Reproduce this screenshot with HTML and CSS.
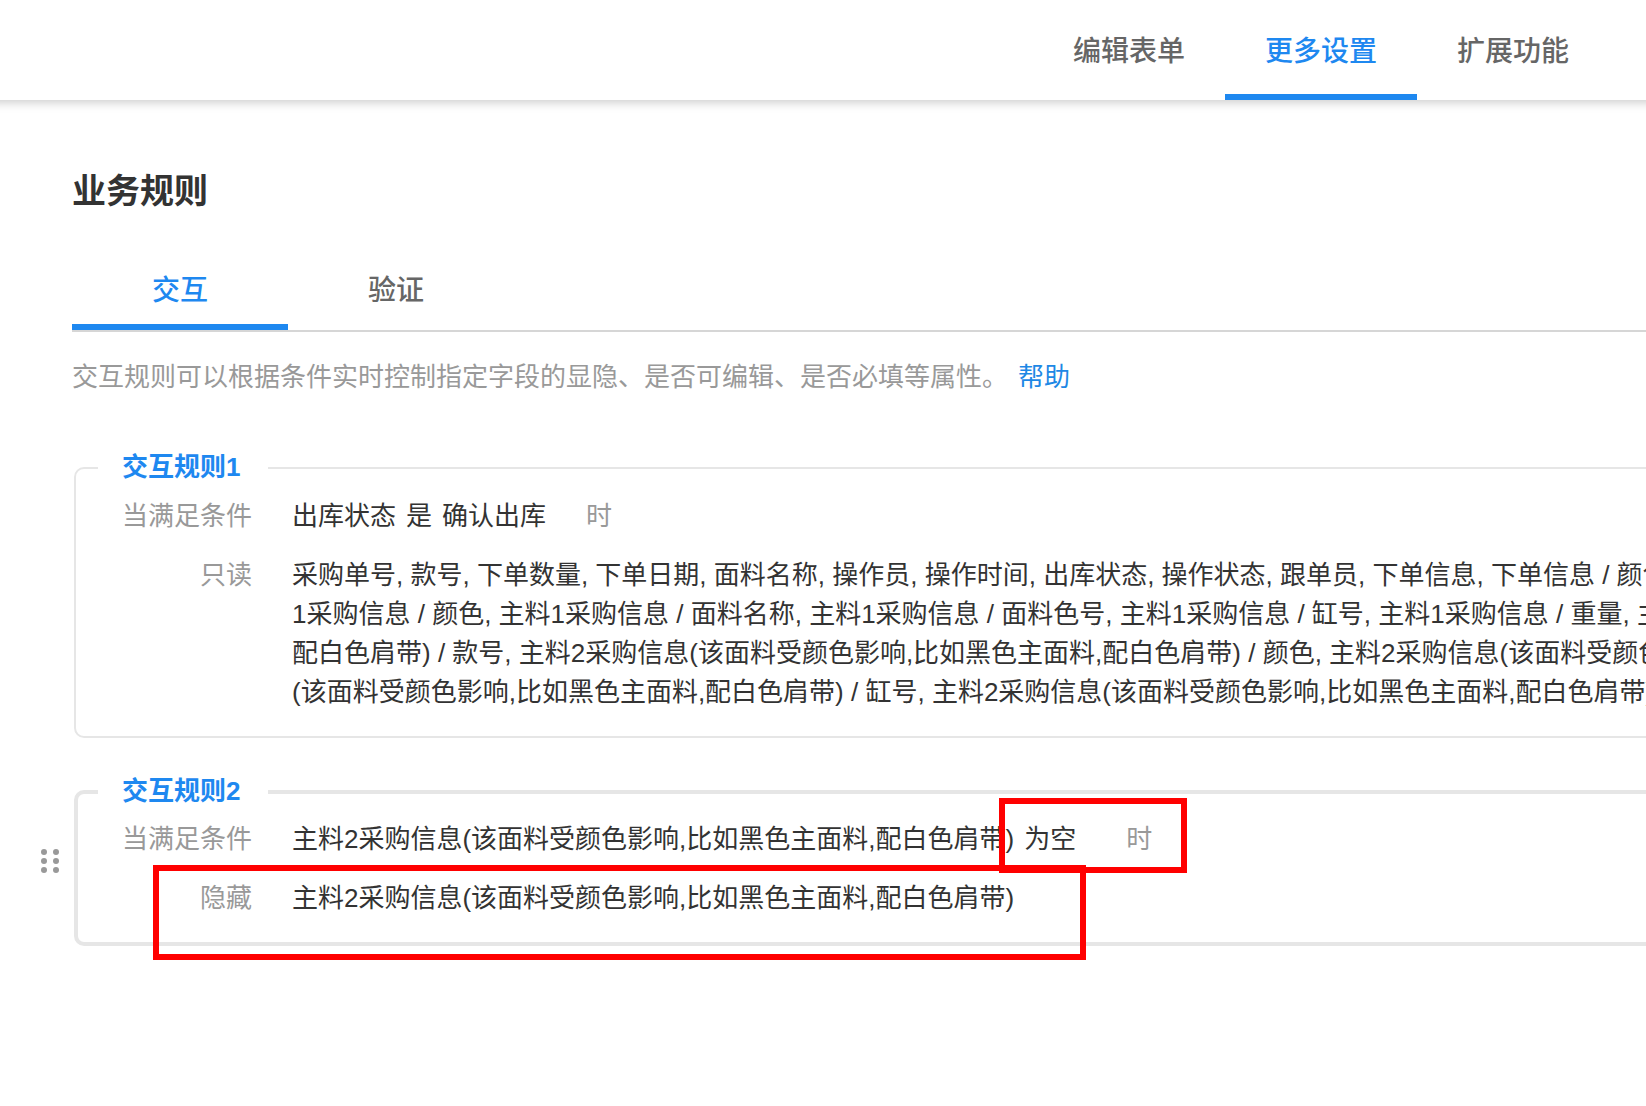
FILE: index.html
```html
<!DOCTYPE html>
<html lang="zh-CN">
<head>
  <meta charset="UTF-8" />
  <meta name="viewport" content="width=device-width, initial-scale=1.0" />
  <title>业务规则</title>
  <link rel="stylesheet" href="styles.css">
</head>
<body>
  <!-- 顶部导航 -->
  <header class="header">
    <nav class="nav">
      <a class="nav-item" href="#edit">编辑表单</a>
      <a class="nav-item active" href="#settings">更多设置</a>
      <a class="nav-item" href="#extend">扩展功能</a>
    </nav>
  </header>

  <main class="main">
    <h1>业务规则</h1>

    <div class="tabs">
      <button class="tab active" type="button">交互</button>
      <button class="tab" type="button">验证</button>
    </div>

    <p class="desc">交互规则可以根据条件实时控制指定字段的显隐、是否可编辑、是否必填等属性。<a href="#help">帮助</a></p>

    <!-- 规则列表 -->
    <div class="rules">
      <div class="rule-item">
        <div class="handle"></div>
        <fieldset class="rule">
          <legend>交互规则1</legend>
          <div class="row">
            <div class="label">当满足条件</div>
            <div class="condition">
              <span>出库状态</span>
              <span>是</span>
              <span>确认出库</span>
              <span class="when">时</span>
            </div>
          </div>
          <div class="row">
            <div class="label">只读</div>
            <div class="fields">采购单号, 款号, 下单数量, 下单日期, 面料名称, 操作员, 操作时间, 出库状态, 操作状态, 跟单员, 下单信息, 下单信息 / 颜色<br>1采购信息 / 颜色, 主料1采购信息 / 面料名称, 主料1采购信息 / 面料色号, 主料1采购信息 / 缸号, 主料1采购信息 / 重量, 主<br>配白色肩带) / 款号, 主料2采购信息(该面料受颜色影响,比如黑色主面料,配白色肩带) / 颜色, 主料2采购信息(该面料受颜色<br>(该面料受颜色影响,比如黑色主面料,配白色肩带) / 缸号, 主料2采购信息(该面料受颜色影响,比如黑色主面料,配白色肩带)</div>
          </div>
        </fieldset>
      </div>

      <div class="rule-item hover">
        <div class="handle">
          <svg width="20" height="24" viewBox="0 0 20 24" fill="#999">
            <circle cx="4" cy="3" r="3" />
            <circle cx="16" cy="3" r="3" />
            <circle cx="4" cy="12" r="3" />
            <circle cx="16" cy="12" r="3" />
            <circle cx="4" cy="21" r="3" />
            <circle cx="16" cy="21" r="3" />
          </svg>
        </div>
        <fieldset class="rule">
          <legend>交互规则2</legend>
          <div class="row">
            <div class="label">当满足条件</div>
            <div class="condition">
              <span>主料2采购信息(该面料受颜色影响,比如黑色主面料,配白色肩带)</span>
              <span>为空</span>
              <span></span>
              <span class="when">时</span>
            </div>
          </div>
          <div class="row">
            <div class="label">隐藏</div>
            <div class="fields">主料2采购信息(该面料受颜色影响,比如黑色主面料,配白色肩带)</div>
          </div>
        </fieldset>
        <!-- 红框标注 -->
        <div class="mark mark-condition"></div>
        <div class="mark mark-fields"></div>
      </div>
    </div>
  </main>
</body>
</html>
```

FILE: styles.css
```css
body {
  margin: 0;
  font-family: "Liberation Sans", "Noto Sans CJK SC", sans-serif;
  font-size: 26px;
  line-height: 39px;
  color: #333;
  background-color: #fff;
  overflow-x: hidden;
}
a {
  color: #1e88e5;
  text-decoration: none;
}
.header {
  margin: 0 -20px;
  padding: 0 20px;
  box-shadow: 0 2px 10px rgba(0, 0, 0, 0.22);
}
.nav {
  display: flex;
  justify-content: flex-end;
  padding-right: 37px;
}
.nav-item {
  padding: 4px 40px 0;
  font-size: 28px;
  font-weight: 500;
  line-height: 96px;
  color: #666;
}
.nav-item.active {
  color: #1e88f0;
  box-shadow: inset 0 -6px #1e88f0;
}
.main {
  padding: 66px 0 65px 72px;
  overflow: hidden;
}
h1 {
  margin: 0 0 31px;
  font-size: 34px;
  font-weight: 600;
  line-height: 51px;
}
.tabs {
  display: flex;
  border-bottom: 2px solid #d6d6d6;
}
.tab {
  padding: 4px 80px 0;
  border: none;
  background: none;
  font-family: inherit;
  font-size: 28px;
  font-weight: 500;
  line-height: 78px;
  color: #666;
  cursor: pointer;
}
.tab.active {
  color: #1e88f0;
  box-shadow: inset 0 -6px #1e88f0;
}
.desc {
  margin: 26px 0 51px;
  color: #999;
}
.desc a {
  margin-left: 10px;
}
.rules {
  display: flex;
  flex-direction: column;
  gap: 34px;
  margin-left: -32px;
  margin-right: -20px;
}
.rule-item {
  position: relative;
  display: flex;
  align-items: center;
}
.handle {
  display: flex;
  flex: none;
  width: 34px;
  padding-top: 4px;
  cursor: move;
}
.rule {
  flex: 1;
  margin: 0;
  padding: 10px 22px 24px;
  border: 2px solid #e6e6e6;
  border-radius: 10px;
}
.hover .rule {
  padding: 9px 20px 24px;
  border-width: 4px;
}
.rule legend {
  padding: 0 28px 0 24px;
  font-weight: 600;
  color: #1e88f0;
}
.row {
  display: flex;
  gap: 40px;
  white-space: nowrap;
}
.row + .row {
  margin-top: 20px;
}
.label {
  flex: none;
  width: 154px;
  text-align: right;
  color: #999;
}
.condition {
  display: flex;
  gap: 10px;
}
.when {
  margin-left: 30px;
  color: #999;
}
.mark {
  position: absolute;
  box-sizing: border-box;
  border: 6px solid #f00;
}
.mark-condition {
  top: 26px;
  left: 959px;
  width: 188px;
  height: 75px;
}
.mark-fields {
  top: 93px;
  left: 113px;
  width: 933px;
  height: 95px;
}
```
